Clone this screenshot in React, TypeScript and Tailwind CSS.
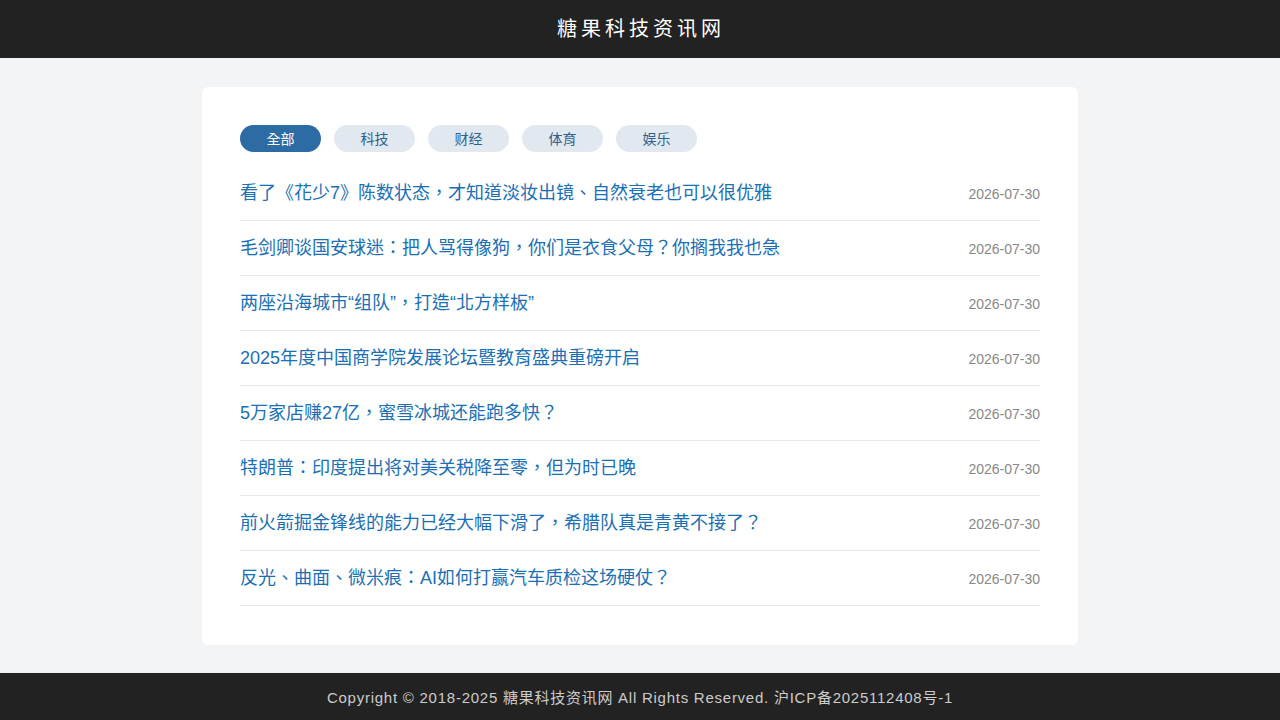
import React from "react";

const tabs = ["全部", "科技", "财经", "体育", "娱乐"];
const news = [
  "看了《花少7》陈数状态，才知道淡妆出镜、自然衰老也可以很优雅",
  "毛剑卿谈国安球迷：把人骂得像狗，你们是衣食父母？你搁我我也急",
  "两座沿海城市“组队”，打造“北方样板”",
  "2025年度中国商学院发展论坛暨教育盛典重磅开启",
  "5万家店赚27亿，蜜雪冰城还能跑多快？",
  "特朗普：印度提出将对美关税降至零，但为时已晚",
  "前火箭掘金锋线的能力已经大幅下滑了，希腊队真是青黄不接了？",
  "反光、曲面、微米痕：AI如何打赢汽车质检这场硬仗？",
];

export default function App() {
  return (
    <div
      className="min-h-screen flex flex-col bg-[#f3f4f6]"
      style={{ fontFamily: '"Liberation Sans", "Noto Sans CJK TC", "Noto Sans CJK SC", sans-serif' }}
    >
      <header className="h-[58px] bg-[#222222] flex items-center justify-center">
        <h1 className="text-white text-[20px] tracking-[4px] pl-[2px]">糖果科技资讯网</h1>
      </header>
      <main className="flex-1 flex justify-center pt-[29px] pb-[28px]">
        <div className="w-[876px] bg-white rounded-[6px] px-[38px] pt-[38px] pb-[39px]">
          <div className="flex gap-[13px] mb-[14px]">
            {tabs.map((t, i) => (
              <button
                key={t}
                className={
                  i === 0
                    ? "w-[81px] h-[27px] rounded-full bg-[#2d6ba5] text-white text-[14px] pt-[1px]"
                    : "w-[81px] h-[27px] rounded-full bg-[#e2e8f0] text-[#2d5f8f] text-[14px] pt-[1px]"
                }
              >
                {t}
              </button>
            ))}
          </div>
          <ul>
            {news.map((n) => (
              <li
                key={n}
                className="h-[55px] flex items-center justify-between border-b border-[#e5e7eb]"
              >
                <span className="text-[18px] text-[#1a6fb5]">{n}</span>
                <span className="text-[14px] text-[#888888] pt-[2px]">2026-07-30</span>
              </li>
            ))}
          </ul>
        </div>
      </main>
      <footer className="h-[47px] bg-[#222222] flex items-center justify-center pt-[4px]">
        <p className="text-[#cccccc] text-[15px] tracking-[0.75px]">
          Copyright © 2018-2025 糖果科技资讯网 All Rights Reserved. 沪ICP备2025112408号-1
        </p>
      </footer>
    </div>
  );
}
